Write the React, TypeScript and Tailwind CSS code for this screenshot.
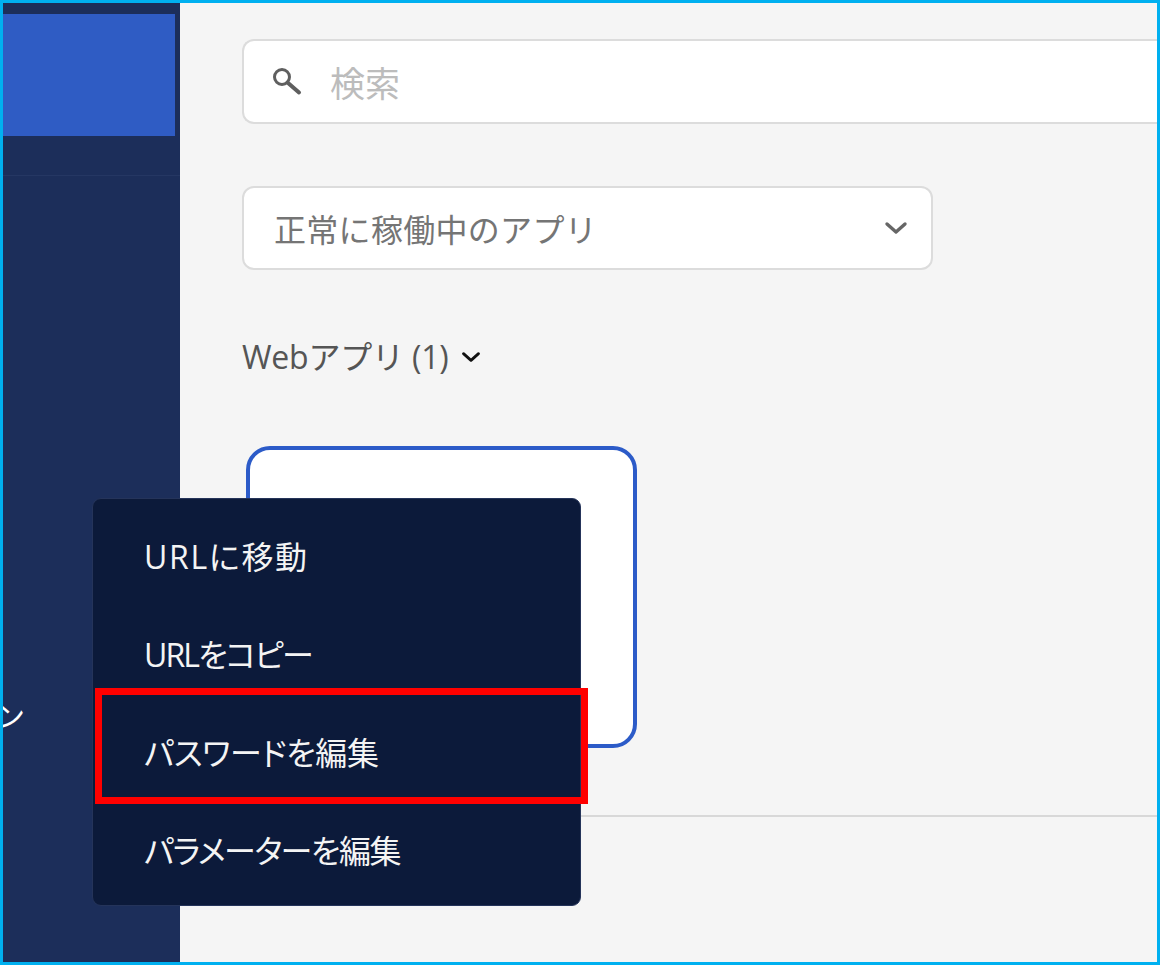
const font = { fontFamily: '"Open Sans", "Noto Sans CJK JP", sans-serif' }

const menuItems = [
  { label: 'URLに移動', tracking: 'tracking-[1.7px]' },
  { label: 'URLをコピー', tracking: 'tracking-[-1.9px]' },
  { label: 'パスワードを編集', tracking: 'tracking-[-0.4px]' },
  { label: 'パラメーターを編集', tracking: 'tracking-[-1.5px]' },
]

function Sidebar() {
  return (
    <aside className="flex h-full w-[177px] shrink-0 flex-col overflow-hidden bg-[#1c2e5a] pt-[11px]">
      <div className="h-[122px] w-[172px] shrink-0 bg-[#2f5cc4]" />
      <div className="mt-[39px] h-px w-full shrink-0 bg-[#253763]" />
      <div className="mt-[522px] flex h-[36px] items-center justify-end pr-[155px] text-[30px] leading-none text-white">
        <span className="whitespace-nowrap">ン</span>
      </div>
    </aside>
  )
}

function SearchIcon() {
  return (
    <svg width="30" height="30" viewBox="0 0 30 30" fill="none" className="shrink-0">
      <circle cx="10" cy="10" r="7.5" stroke="#5f5f5f" strokeWidth="3" />
      <path d="M15.5 15.5 L27 25.5" stroke="#5f5f5f" strokeWidth="4" strokeLinecap="round" />
    </svg>
  )
}

function Chevron({ className, color }: { className: string; color: string }) {
  return (
    <svg viewBox="0 0 24 14" fill="none" className={className}>
      <path d="M3 3 L12 11 L21 3" stroke={color} strokeWidth="3.4" strokeLinecap="round" strokeLinejoin="round" />
    </svg>
  )
}

function Main() {
  return (
    <main className="flex h-full min-w-0 flex-1 flex-col bg-[#f5f5f5] pt-[36px]">
      <div className="ml-[61px] flex h-[85px] items-center rounded-l-[12px] border-y-2 border-l-2 border-[#dcdcdc] bg-white pl-[28px]">
        <SearchIcon />
        <span className="ml-[28px] pt-[4px] text-[35px] leading-none text-[#bcbcbc]">検索</span>
      </div>
      <div className="ml-[61px] mt-[62px] flex h-[84px] w-[691px] items-center justify-between rounded-[12px] border-2 border-[#dcdcdc] bg-white pl-[30px] pr-[23px]">
        <span className="pt-[3px] text-[32px] leading-none tracking-[0.3px] text-[#757575]">正常に稼働中のアプリ</span>
        <Chevron className="h-[14px] w-[24px]" color="#666666" />
      </div>
      <div className="ml-[61px] mt-[63px] flex h-[48px] items-center">
        <span className="text-[32px] leading-none tracking-[-0.2px] text-[#555555]">Webアプリ (1)</span>
        <Chevron className="ml-[12px] h-[12px] w-[20px]" color="#111111" />
      </div>
      <div className="ml-[65px] mt-[65px] h-[302px] w-[391px] rounded-[24px] border-4 border-[#2c5bc8] bg-white" />
      <div className="mt-[67px] h-[2px] w-full bg-[#d8d8d8]" />
    </main>
  )
}

function Menu() {
  return (
    <div className="absolute left-[89px] top-[495px] flex h-[408px] w-[489px] flex-col rounded-[9px] border border-[#25345a] bg-[#0c1a3a] pt-[9px]">
      {menuItems.map((item) => (
        <div
          key={item.label}
          className={`flex h-[98px] shrink-0 items-center pl-[51px] text-[32px] leading-none text-[#f4f4f4] [font-feature-settings:'palt'] ${item.tracking}`}
        >
          {item.label}
        </div>
      ))}
    </div>
  )
}

function App() {
  return (
    <div className="relative flex h-[965px] w-[1160px] overflow-hidden border-[3px] border-[#00b0f0] bg-[#f5f5f5]" style={font}>
      <Sidebar />
      <div className="w-px shrink-0" />
      <Main />
      <Menu />
      <div className="absolute left-[92px] top-[685px] h-[116px] w-[493px] border-[7px] border-[#ff0000]" />
    </div>
  )
}

export default App
